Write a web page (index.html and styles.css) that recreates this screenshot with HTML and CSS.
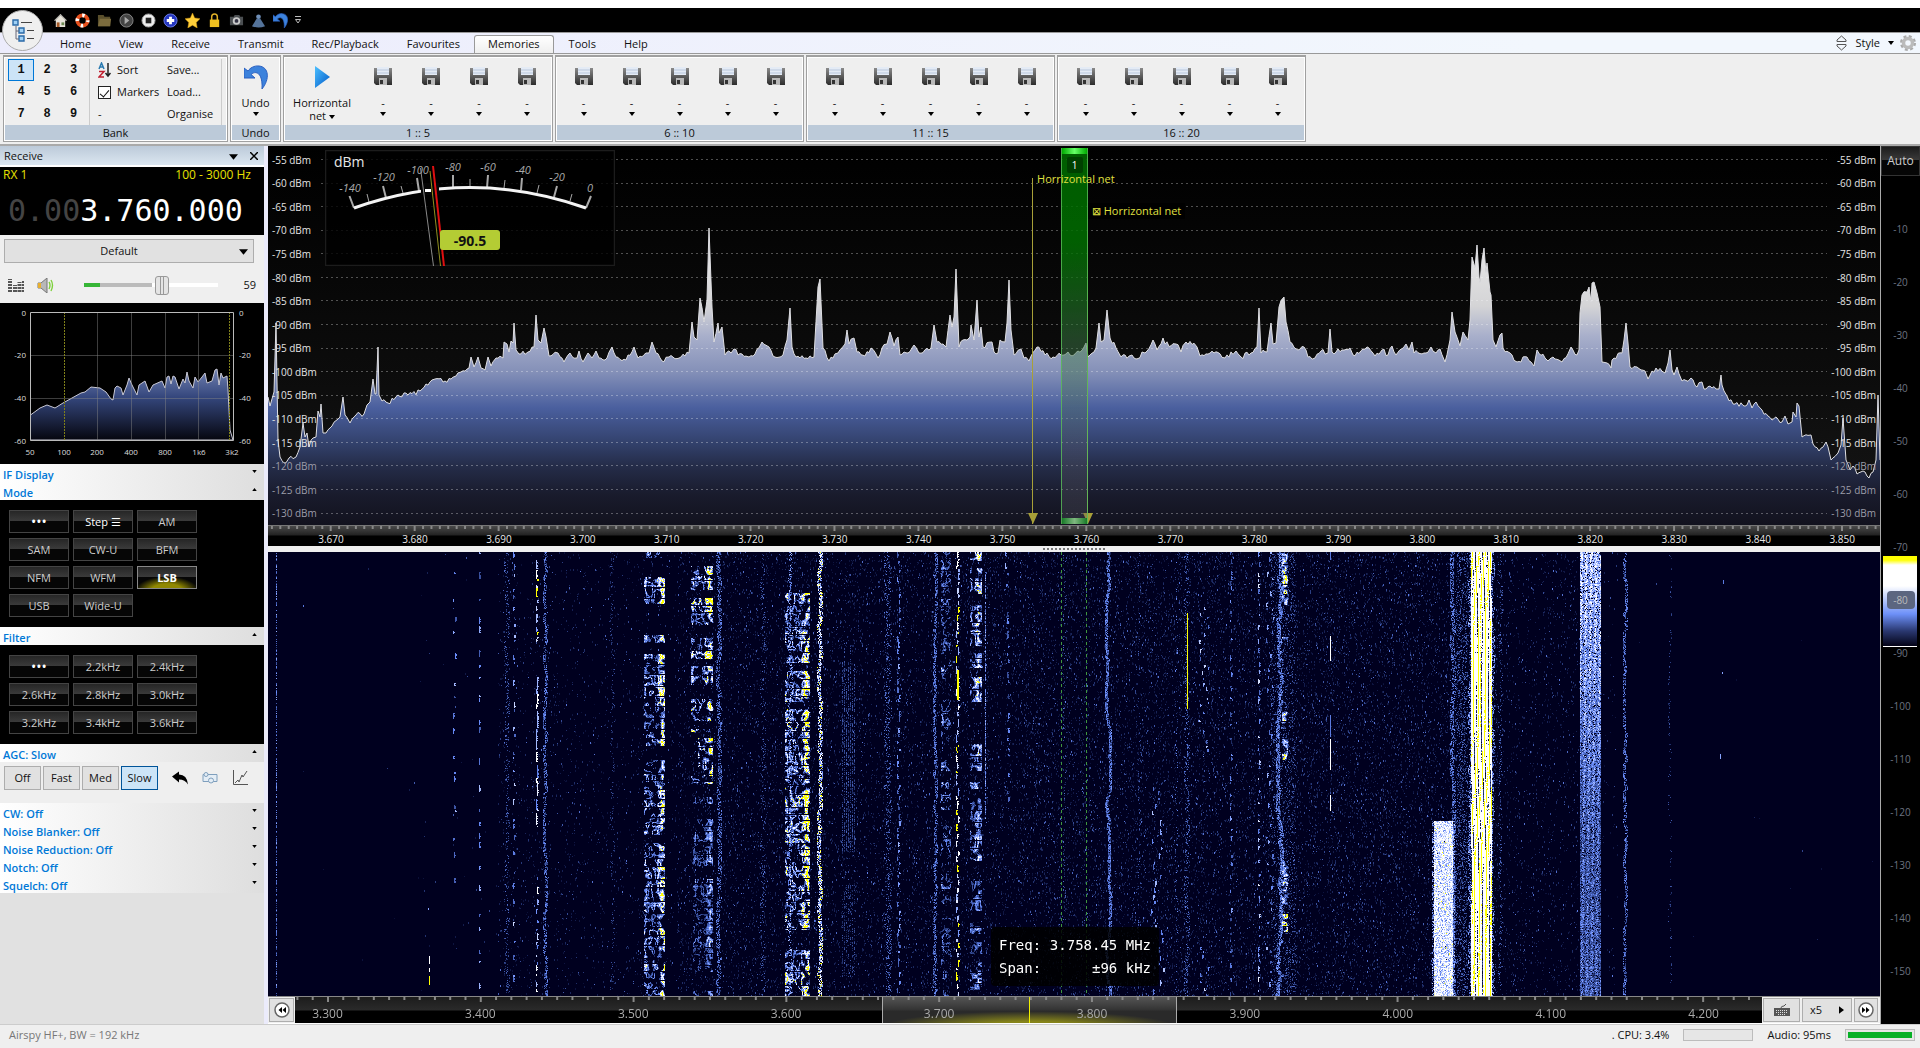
FILE: index.html
```html
<!DOCTYPE html>
<html lang="en">
<head>
<meta charset="utf-8">
<title>SDR Console</title>
<link rel="stylesheet" href="styles.css">
</head>
<body>
<svg class="defs" aria-hidden="true">
  <defs>
    <linearGradient id="gDisk" x1="0" y1="0" x2="0" y2="1"><stop offset="0" stop-color="#8a8a8a"/><stop offset="1" stop-color="#2c2c2c"/></linearGradient>
    <linearGradient id="gBlue" x1="0" y1="0" x2="1" y2="1"><stop offset="0" stop-color="#4cc0ff"/><stop offset="1" stop-color="#0058c8"/></linearGradient>
    <symbol id="disk" viewBox="0 0 18 18"><path d="M0 1h18v17H2l-2-2z" fill="url(#gDisk)"/><path d="M3 0h12v8H3z" fill="#e4ebf5"/><path d="M3 3h12M3 6h12" stroke="#b9c7dc"/><path d="M5 11h8v7H5z" fill="#b9b9b9"/><path d="M6 13h3v4H6z" fill="#333"/></symbol>
    <symbol id="down" viewBox="0 0 6 4"><path d="M0 0h6L3 4z"/></symbol>
    <symbol id="up" viewBox="0 0 6 4"><path d="M0 4h6L3 0z"/></symbol>
    <symbol id="undo" viewBox="0 0 24 24"><path d="M0 3v10h11l-4-3.500C12 5 19 8 18 24 26 14 25 2 15 1 10 .500 6 3 4 6z" fill="#3c82dc" stroke="#2a5fc0" stroke-width="1"/></symbol>
  </defs>
</svg>

<header class="top">
  <button class="app" aria-label="Application menu"><svg viewBox="0 0 40 40" width="40" height="40"><g fill="#9fd0f5" stroke="#2a6aa8" stroke-width="1.4"><path d="M10 9h5v5h-5zM16 17h5v5h-5zM16 25h5v5h-5z"/></g><path d="M13 15v13h3M13 20h3" fill="none" stroke="#667" /><path d="M18 11.500h11M24 19.500h7M24 27.500h7" stroke="#444"/></svg></button>
  <div class="qat">
    <button aria-label="Home"><svg viewBox="0 0 16 16"><path d="M1 8l7-7 7 7h-2v7H3V8z" fill="#e8e4da"/><path d="M2 8l6-6 6 6" fill="none" stroke="#8b8b8b"/><path d="M4 10h3v5H4z" fill="#a65a28"/><path d="M9 10h3v3H9z" fill="#6d8a55"/></svg></button>
    <button aria-label="Support"><svg viewBox="0 0 16 16"><circle cx="8" cy="8" r="5.500" fill="none" stroke="#e8501c" stroke-width="4"/><circle cx="8" cy="8" r="5.500" fill="none" stroke="#fff" stroke-width="4" stroke-dasharray="2.640 6" stroke-dashoffset="1"/></svg></button>
    <button aria-label="Open"><svg viewBox="0 0 16 16"><path d="M1 2h6l1 2h6v10H1z" fill="#5a4f2c"/><path d="M3 6h12l-1 8H1z" fill="#7c6c3e"/></svg></button>
    <button aria-label="Play"><svg viewBox="0 0 16 16"><circle cx="8" cy="8" r="7" fill="#444" stroke="#888"/><path d="M6 4l5 4-5 4z" fill="#aaa"/></svg></button>
    <button aria-label="Stop"><svg viewBox="0 0 16 16"><circle cx="8" cy="8" r="7" fill="#eee" stroke="#999"/><path d="M5 5h6v6H5z" fill="#222"/></svg></button>
    <button aria-label="Add"><svg viewBox="0 0 16 16"><circle cx="8" cy="8" r="7" fill="#2436c0" stroke="#6f80e8"/><path d="M6.500 4h3v2.500H12v3H9.500V12h-3V9.500H4v-3h2.500z" fill="#fff"/></svg></button>
    <button aria-label="Favourite"><svg viewBox="0 0 16 16"><path d="M8 0l2.300 5.300L16 6l-4 4 1 6-5-3-5 3 1-6-4-4 5.700-.7z" fill="#ffcf3a" stroke="#d89a10" stroke-width=".5"/></svg></button>
    <button aria-label="Lock"><svg viewBox="0 0 16 16"><path d="M5 8V4a3 3 0 016 0v4" fill="none" stroke="#e0b028" stroke-width="1.600"/><path d="M3 7h10v8H3z" fill="#f0c020"/></svg></button>
    <button aria-label="Snapshot"><svg viewBox="0 0 16 16"><path d="M1 4h4l1-2h5l1 2h3v9H1z" fill="#4b4f52"/><circle cx="8" cy="8.500" r="4" fill="#c8c8c8"/><circle cx="8" cy="8.500" r="2" fill="#334"/></svg></button>
    <button aria-label="Recording"><svg viewBox="0 0 16 16"><path d="M6 6h4l5 8q-7 3-14 0z" fill="#54739a"/><circle cx="8" cy="4" r="2.500" fill="#6f8fb8"/></svg></button>
    <button aria-label="Undo"><svg viewBox="0 0 24 24"><use href="#undo"/></svg></button>
    <button class="more" aria-label="Customise"><svg viewBox="0 0 6 8" width="6" height="8"><path d="M0 .5h6M.5 3.500h5L3 7z" fill="none" stroke="#bbb"/></svg></button>
  </div>
  <nav class="tabs">
    <a href="#">Home</a><a href="#">View</a><a href="#">Receive</a><a href="#">Transmit</a><a href="#">Rec/Playback</a><a href="#">Favourites</a><a href="#" class="on">Memories</a><a href="#">Tools</a><a href="#">Help</a>
    <div class="tabs-end">
      <button aria-label="Resize"><svg viewBox="0 0 11 16" width="11" height="16" fill="none" stroke="#555"><path d="M1 6.500V5l4.500-4L10 5v1.500zM1 9.500V11l4.500 4L10 11V9.500z"/></svg></button>
      <button class="style">Style <svg width="6" height="4"><use href="#down"/></svg></button>
      <button aria-label="Settings"><svg viewBox="0 0 16 16" width="16" height="16"><circle cx="8" cy="8" r="6.500" fill="none" stroke="#aaa" stroke-width="3" stroke-dasharray="2.800 2.300"/><circle cx="8" cy="8" r="4.500" fill="none" stroke="#bbb" stroke-width="3.500"/></svg></button>
    </div>
  </nav>
</header>

<section class="ribbon" aria-label="Memories">
  <div class="group bank">
    <div class="group-body">
      <div class="nums"><button class="on">1</button><button>2</button><button>3</button><button>4</button><button>5</button><button>6</button><button>7</button><button>8</button><button>9</button></div>
      <div class="cmds">
        <button><svg viewBox="0 0 13 16" width="13" height="16" fill="none" stroke-width="1.500"><path d="M1 7l2.500-6L6 7M2 5h3" stroke="#2a7ab0"/><path d="M1 9.500h5L1 15h5" stroke="#c02030"/><path d="M10 1v12M7.500 11l2.500 3 2.500-3" stroke="#222"/></svg>Sort</button>
        <label><input type="checkbox" checked>Markers</label>
        <button>-</button>
      </div>
      <div class="cmds files"><button>Save...</button><button>Load...</button><button>Organise</button></div>
    </div>
    <h2>Bank</h2>
  </div>
  <div class="group undo">
    <div class="group-body"><button class="big"><svg class="ico" viewBox="0 0 24 24"><use href="#undo"/></svg><span>Undo</span><svg class="arr"><use href="#down"/></svg></button></div>
    <h2>Undo</h2>
  </div>
  <div class="group first">
    <div class="group-body">
      <button class="big wide"><svg class="ico" viewBox="0 0 24 24"><path d="M5 1l15 11L5 23z" fill="url(#gBlue)"/></svg><span>Horrizontal<br>net <svg class="arr"><use href="#down"/></svg></span></button>
      <button class="big"><svg class="disk"><use href="#disk"/></svg><span>-</span><svg class="arr"><use href="#down"/></svg></button>
      <button class="big"><svg class="disk"><use href="#disk"/></svg><span>-</span><svg class="arr"><use href="#down"/></svg></button>
      <button class="big"><svg class="disk"><use href="#disk"/></svg><span>-</span><svg class="arr"><use href="#down"/></svg></button>
      <button class="big"><svg class="disk"><use href="#disk"/></svg><span>-</span><svg class="arr"><use href="#down"/></svg></button>
    </div>
    <h2>1 :: 5</h2>
  </div>
  <div class="group">
    <div class="group-body">
      <button class="big"><svg class="disk"><use href="#disk"/></svg><span>-</span><svg class="arr"><use href="#down"/></svg></button>
      <button class="big"><svg class="disk"><use href="#disk"/></svg><span>-</span><svg class="arr"><use href="#down"/></svg></button>
      <button class="big"><svg class="disk"><use href="#disk"/></svg><span>-</span><svg class="arr"><use href="#down"/></svg></button>
      <button class="big"><svg class="disk"><use href="#disk"/></svg><span>-</span><svg class="arr"><use href="#down"/></svg></button>
      <button class="big"><svg class="disk"><use href="#disk"/></svg><span>-</span><svg class="arr"><use href="#down"/></svg></button>
    </div>
    <h2>6 :: 10</h2>
  </div>
  <div class="group">
    <div class="group-body">
      <button class="big"><svg class="disk"><use href="#disk"/></svg><span>-</span><svg class="arr"><use href="#down"/></svg></button>
      <button class="big"><svg class="disk"><use href="#disk"/></svg><span>-</span><svg class="arr"><use href="#down"/></svg></button>
      <button class="big"><svg class="disk"><use href="#disk"/></svg><span>-</span><svg class="arr"><use href="#down"/></svg></button>
      <button class="big"><svg class="disk"><use href="#disk"/></svg><span>-</span><svg class="arr"><use href="#down"/></svg></button>
      <button class="big"><svg class="disk"><use href="#disk"/></svg><span>-</span><svg class="arr"><use href="#down"/></svg></button>
    </div>
    <h2>11 :: 15</h2>
  </div>
  <div class="group">
    <div class="group-body">
      <button class="big"><svg class="disk"><use href="#disk"/></svg><span>-</span><svg class="arr"><use href="#down"/></svg></button>
      <button class="big"><svg class="disk"><use href="#disk"/></svg><span>-</span><svg class="arr"><use href="#down"/></svg></button>
      <button class="big"><svg class="disk"><use href="#disk"/></svg><span>-</span><svg class="arr"><use href="#down"/></svg></button>
      <button class="big"><svg class="disk"><use href="#disk"/></svg><span>-</span><svg class="arr"><use href="#down"/></svg></button>
      <button class="big"><svg class="disk"><use href="#disk"/></svg><span>-</span><svg class="arr"><use href="#down"/></svg></button>
    </div>
    <h2>16 :: 20</h2>
  </div>
</section>

<main>
  <aside class="side">
    <div class="side-title"><span>Receive</span><button aria-label="Menu"><svg viewBox="0 0 10 6" width="9" height="6"><path d="M0 0h10L5 6z"/></svg></button><button aria-label="Close"><svg viewBox="0 0 8 8" width="8" height="8"><path d="M0 0l8 8M8 0L0 8" stroke="#000" stroke-width="1.500"/></svg></button></div>
    <div class="rx">
      <div class="rx-info"><span>RX 1</span><span>100 - 3000 Hz</span></div>
      <div class="freq"><span>0.00</span>3.760.000</div>
    </div>
    <div class="controls">
      <div class="pick"><select aria-label="Audio device"><option>Default</option></select><svg viewBox="0 0 10 6" width="9" height="6"><path d="M0 0h10L5 6z"/></svg></div>
      <div class="volume">
        <svg viewBox="0 0 16 13" width="16" height="13" fill="none" stroke="#555" stroke-width="4" stroke-dasharray="2 1"><path d="M2 13V0M7 13V6M11.500 13V3" /><path d="M15 13V1" stroke-width="2"/></svg>
        <svg viewBox="0 0 17 15" width="17" height="15"><path d="M1 5h3l6-5v15l-6-5H1z" fill="#b8b8b8" stroke="#777"/><path d="M1 5h3v5H1z" fill="#e8b030"/><path d="M12 4q2 3 0 7M14 2q3 5 0 11" fill="none" stroke="#7ed03c" stroke-width="1.400"/></svg>
        <input type="range" min="0" max="100" value="59" aria-label="Volume">
        <output>59</output>
      </div>
    </div>
    <svg class="audio" viewBox="0 0 264 161" role="img" aria-label="Audio spectrum">
      <defs><linearGradient id="gAud" gradientUnits="userSpaceOnUse" x1="0" y1="66" x2="0" y2="137"><stop offset="0" stop-color="#7080b0"/><stop offset=".4" stop-color="#34467c"/><stop offset="1" stop-color="#06060f"/></linearGradient></defs>
      <path fill="url(#gAud)" stroke="#c8c8d4" d="M30.500 137V112L40 105 47 102 55 105 63 100 72 95 81 90 85 89 91 84 100 85 106 89 111 96 113 97 115 85 117 83 121 85 123 92 127 82 129 75 132 82 137 92 139 82 145 78 149 89 153 82 162 78 165 85 167 74 169 73 171 81 173 73 175 74 179 86 183 76 185 80 187 69 189 78 193 85 195 74 198 79 202 74 205 70 207 80 212 78 215 67 217 66 219 82 221 70 223 75 227 73 228 87 230 127 233 137z"/>
      <path d="M97.500 9v128M131.500 9v128M165.500 9v128M198.500 9v128M30 52.500h203M30 95.500h203" stroke="#888" opacity=".45" fill="none"/>
      <path d="M64.500 9v128M229.500 9v128" stroke="#80801a" stroke-dasharray="2 1" fill="none"/>
      <path d="M30.500 9.500h203v128h-203z" stroke="#bbb" fill="none"/>
      <g class="end"><text x="26" y="13">0</text><text x="26" y="55">-20</text><text x="26" y="98">-40</text><text x="26" y="141">-60</text></g>
      <g><text x="239" y="13">0</text><text x="239" y="55">-20</text><text x="239" y="98">-40</text><text x="239" y="141">-60</text></g>
      <g class="mid"><text x="30" y="152">50</text><text x="64" y="152">100</text><text x="97" y="152">200</text><text x="131" y="152">400</text><text x="165" y="152">800</text><text x="199" y="152">1k6</text><text x="232" y="152">3k2</text></g>
    </svg>
    <h3><button>IF Display<svg><use href="#down"/></svg></button></h3>
    <h3><button>Mode<svg><use href="#up"/></svg></button></h3>
    <div class="keys"><button class="dots">•••</button><button class="lit">Step ☰</button><button>AM</button><button>SAM</button><button>CW-U</button><button>BFM</button><button>NFM</button><button>WFM</button><button class="on">LSB</button><button>USB</button><button>Wide-U</button></div>
    <h3><button>Filter<svg><use href="#up"/></svg></button></h3>
    <div class="keys"><button class="dots">•••</button><button>2.2kHz</button><button>2.4kHz</button><button>2.6kHz</button><button>2.8kHz</button><button>3.0kHz</button><button>3.2kHz</button><button>3.4kHz</button><button>3.6kHz</button></div>
    <h3><button>AGC: Slow<svg><use href="#up"/></svg></button></h3>
    <div class="agc">
      <button>Off</button><button>Fast</button><button>Med</button><button class="on">Slow</button>
      <button class="bare" aria-label="Reset"><svg viewBox="0 0 16 13"><path d="M0 5l7-5v3q8 0 9 10-3-5-9-5v3z"/></svg></button>
      <button class="bare" aria-label="Options"><svg viewBox="0 0 16 13" fill="#e4edf5" stroke="#7f9fbd"><path d="M1 3h14v7H1z"/><circle cx="4" cy="3" r="2"/><circle cx="9" cy="9" r="2.500"/></svg></button>
      <button class="bare" aria-label="Graph"><svg viewBox="0 0 16 16" fill="none" stroke="#555"><path d="M1.500 0v14.500H16M3 13l3-3 1 2 3-7 1 2 4-6"/></svg></button>
    </div>
    <h3><button>CW: Off<svg><use href="#down"/></svg></button></h3>
    <h3><button>Noise Blanker: Off<svg><use href="#down"/></svg></button></h3>
    <h3><button>Noise Reduction: Off<svg><use href="#down"/></svg></button></h3>
    <h3><button>Notch: Off<svg><use href="#down"/></svg></button></h3>
    <h3><button>Squelch: Off<svg><use href="#down"/></svg></button></h3>
  </aside>

  <section class="center">
    <div class="spectrum">
      <svg class="trace" viewBox="0 0 1612 379" preserveAspectRatio="none" aria-label="Spectrum">
        <defs><linearGradient id="gSp" gradientUnits="userSpaceOnUse" x1="0" y1="79" x2="0" y2="379"><stop offset="0" stop-color="#efefef"/><stop offset=".27" stop-color="#d4d4d6"/><stop offset=".37" stop-color="#a8afcb"/><stop offset=".49" stop-color="#8490b8"/><stop offset=".61" stop-color="#4a5f9e"/><stop offset=".72" stop-color="#34436f"/><stop offset=".8" stop-color="#252d4a"/><stop offset=".9" stop-color="#191b2c"/><stop offset="1" stop-color="#12121e"/></linearGradient></defs>
        <path id="fill" fill="url(#gSp)"/><path id="line" fill="none" stroke="#dedee2"/>
        <g id="grid" stroke="#fff" stroke-opacity=".3" stroke-dasharray="2 3"></g>
      </svg>
      <ul class="db"><li>-55 dBm</li><li>-60 dBm</li><li>-65 dBm</li><li>-70 dBm</li><li>-75 dBm</li><li>-80 dBm</li><li>-85 dBm</li><li>-90 dBm</li><li>-95 dBm</li><li>-100 dBm</li><li>-105 dBm</li><li>-110 dBm</li><li>-115 dBm</li><li>-120 dBm</li><li>-125 dBm</li><li>-130 dBm</li></ul>
      <ul class="db right"><li>-55 dBm</li><li>-60 dBm</li><li>-65 dBm</li><li>-70 dBm</li><li>-75 dBm</li><li>-80 dBm</li><li>-85 dBm</li><li>-90 dBm</li><li>-95 dBm</li><li>-100 dBm</li><li>-105 dBm</li><li>-110 dBm</li><li>-115 dBm</li><li>-120 dBm</li><li>-125 dBm</li><li>-130 dBm</li></ul>
      <svg class="meter" viewBox="0 0 290 116" role="img" aria-label="Signal meter">
        <path d="M.5.5h289v115H.5z" fill="#000" fill-opacity=".8" stroke="#1c1c1c" stroke-width="1.500"/>
        <g stroke="#a8a8a8" stroke-width="2"><path d="M24.500 46L29 58M58 36l3 12M92 28l2 13M128 25v13M163 25l-1 13M197 28l-1 12M232 36l-3 11M266 46l-5 12"/><path d="M42 44l2 8M76 36l2 7M145 29v8M180 30l-1 8M214 35l-2 8M247 44l-2 7" stroke-width="1"/></g>
        <path d="M29 58Q145 17 261 58" fill="none" stroke="#f4f4f4" stroke-width="3"/>
        <path d="M96 33h18v12H96z" fill="#050505"/><path d="M100 40.500h6" stroke="#fff" stroke-width="3"/>
        <path d="M95.500 18l13 98" stroke="#888"/><path d="M105 21l10.500 95" stroke="#909020"/><path d="M108 16l11 100" stroke="#e01010" stroke-width="2"/>
        <text x="9" y="17" class="unit">dBm</text>
        <g class="nums"><text x="25" y="42">-140</text><text x="59" y="31">-120</text><text x="93" y="24">-100</text><text x="128" y="21">-80</text><text x="163" y="21">-60</text><text x="198" y="24">-40</text><text x="232" y="31">-20</text><text x="265" y="42">0</text></g>
        <rect x="115" y="80" width="60" height="20" rx="3" fill="#b4cc34"/><text x="145" y="96" class="val">-90.5</text>
      </svg>
      <div class="marker low" style="left:50.800%"><span>⊠ Horrizontal net</span></div>
      <div class="pass" style="left:49.200%;width:1.670%"><b>1</b></div>
      <div class="marker" style="left:47.400%"><span>Horrizontal net</span></div>
    </div>
    <div class="fscale"><svg id="ticks1"></svg><ol><li>3.670</li><li>3.680</li><li>3.690</li><li>3.700</li><li>3.710</li><li>3.720</li><li>3.730</li><li>3.740</li><li>3.750</li><li>3.760</li><li>3.770</li><li>3.780</li><li>3.790</li><li>3.800</li><li>3.810</li><li>3.820</li><li>3.830</li><li>3.840</li><li>3.850</li></ol></div>
    <div class="split"><i></i></div>
    <div class="fall">
      <canvas id="fall"></canvas>
      <i class="edge" style="left:49.200%"></i><i class="edge" style="left:50.750%"></i>
      <div class="tip"><span>Freq:</span><span>3.758.45 MHz</span><span>Span:</span><span>±96 kHz</span></div>
    </div>
    <div class="nav">
      <button class="jump" aria-label="Back"><svg viewBox="0 0 16 16" width="16" height="16"><circle cx="8" cy="8" r="7" fill="#fff" stroke="#666" stroke-width="1.500"/><path d="M8 5v6L4.500 8zM12 5v6L8.500 8z"/></svg></button>
      <div class="wide-scale"><div class="view" style="left:40%;width:20.100%"><i></i></div><svg id="ticks2"></svg><ol><li>3.300</li><li>3.400</li><li>3.500</li><li>3.600</li><li>3.700</li><li>3.800</li><li>3.900</li><li>4.000</li><li>4.100</li><li>4.200</li></ol></div>
      <div class="nav-end">
        <button aria-label="Keyboard"><svg viewBox="0 0 16 13" width="16" height="13"><path d="M0 4h16v8H0z" fill="#555"/><path d="M2 6.500h12M2 8.500h12M4 10.500h8" stroke="#ddd" stroke-dasharray="1 1"/><path d="M7 4q0-2 3-2l2-2" fill="none" stroke="#555"/></svg></button>
        <button class="zoom">x5<svg viewBox="0 0 4 6" width="5" height="8"><path d="M0 0l4 3-4 3z"/></svg></button>
        <button aria-label="Forward"><svg viewBox="0 0 16 16" width="16" height="16"><circle cx="8" cy="8" r="7" fill="#fff" stroke="#666" stroke-width="1.500"/><path d="M8 5v6l3.500-3zM4 5v6l3.500-3z"/></svg></button>
      </div>
    </div>
  </section>

  <section class="level">
    <button>Auto</button>
    <div class="ramp"></div>
    <ul><li>-10</li><li>-20</li><li>-30</li><li>-40</li><li>-50</li><li>-60</li><li>-70</li><li class="thumb"><span>-80</span></li><li>-90</li><li>-100</li><li>-110</li><li>-120</li><li>-130</li><li>-140</li><li>-150</li></ul>
  </section>
</main>

<footer><span class="dev">Airspy HF+, BW = 192 kHz</span><span>. CPU: 3.4%</span><div class="bar"></div><span>Audio: 95ms</span><div class="bar full"><i></i></div></footer>
<script src="app.js"></script>
</body>
</html>
```
FILE: styles.css
```css
* { box-sizing: border-box; }
body { margin: 0; min-height: 100vh; display: flex; flex-direction: column; background: #efefef; color: #111; font: 11px/16px "Open Sans", "Noto Sans", sans-serif; }
button { font: inherit; color: inherit; background: none; border: 0; padding: 0; margin: 0; }
ul, ol { list-style: none; margin: 0; padding: 0; }
h2, h3 { margin: 0; font: inherit; }
a { color: inherit; text-decoration: none; }
svg { flex: none; }
.defs { position: absolute; width: 0; height: 0; }

.top { position: relative; padding-top: 8px; background: #fff; }
.app { position: absolute; left: 2px; top: 10px; width: 41px; height: 41px; border-radius: 50%; border: 1px solid #aaa; background: #efefef; overflow: hidden; z-index: 1; }
.app svg { display: block; }
.qat { display: flex; align-items: center; height: 24px; padding-left: 49px; background: #000; }
.qat button { width: 22px; height: 16px; display: flex; justify-content: center; align-items: center; }
.qat svg { width: 15px; height: 15px; }
.qat .more { width: 14px; }
.qat .more svg { width: 6px; height: 8px; }
.tabs { display: flex; height: 22px; padding-left: 46px; background: linear-gradient(90deg, #ececfc, #f2f7fd 80%); border: solid #999; border-width: 1px 0; }
.tabs a { padding: 3px 14px 0; }
.tabs .on { padding: 0 13px; margin: 2px 1px 0 0; border: 1px solid #999; border-bottom: 0; border-radius: 3px 3px 0 0; background: linear-gradient(#fff, #efefef); }
.tabs-end { margin-left: auto; display: flex; align-items: center; gap: 6px; padding-right: 4px; }
.tabs-end button { display: flex; align-items: center; gap: 8px; }
.tabs-end .style { margin-left: 3px; }

.ribbon { display: flex; gap: 2px; height: 92px; padding: 1px 3px 2px; border-bottom: 2px solid #aaa; }
.group { width: 249px; display: flex; flex-direction: column; border: 1px solid #a0a0a0; border-top-width: 2px; box-shadow: inset 0 0 0 1px #fff; padding: 1px; }
.bank { width: 225px; }
.undo { width: 51px; }
.first { width: 270px; }
.group h2 { height: 15px; line-height: 15px; text-align: center; background: #bccad9; }
.group-body { flex: 1; display: flex; justify-content: center; }
.bank .group-body { justify-content: flex-start; padding: 1px 3px 0; }
.nums { display: grid; grid-template-columns: repeat(3, 26px); grid-auto-rows: 22px; }
.bank .nums { grid-template-columns: 26px 26px 27px; padding-right: 1px; margin-right: -1px; }
.nums button { font: bold 12px "Liberation Mono", monospace; border: 1px solid transparent; }
.nums .on { border-color: #0078d7; background: #cce4f7; }
.cmds { display: grid; grid-auto-rows: 22px; justify-items: start; padding: 0 4px 0 8px; margin-left: 2px; border-left: 1px solid #ccc; width: 77px; }
.cmds button, .cmds label { display: flex; align-items: center; gap: 6px; }
.files { width: 56px; margin: 0; padding: 0 0 0 1px; border: solid #ccc; border-width: 0 1px 0 0; }
.cmds input { appearance: none; margin: 0; width: 13px; height: 13px; border: 1px solid #222; background: #fff; display: grid; place-items: center; }
.cmds input::after { content: ""; width: 4px; height: 8px; border: solid #111; border-width: 0 1px 1px 0; transform: rotate(40deg); }
.big { width: 48px; display: flex; flex-direction: column; align-items: center; padding-top: 8px; line-height: 13px; }
.big .ico { width: 26px; height: 24px; margin: -1px 0 7px; }
.big .disk { width: 18px; height: 18px; margin: 1px 0 11px; }
.big .arr { width: 6px; height: 4px; margin-top: 3px; vertical-align: middle; }
.big span .arr { margin: 0; }
.big.wide { width: 74px; }

main { flex: 1; display: flex; background: #ebebfb; }
.side { width: 264px; margin-right: 4px; background: #e1e1e1; }
.side-title { display: flex; align-items: center; gap: 12px; height: 21px; padding: 0 6px 0 4px; background: linear-gradient(#bccad9, #dbe6f0); border-bottom: 2px solid #fff; }
.side-title span { flex: 1; }
.rx { height: 68px; background: #000; color: #e6e000; }
.rx-info { display: flex; justify-content: space-between; padding: 0 13px 0 3px; font-size: 12px; }
.freq { font: 30px/36px "DejaVu Sans Mono", monospace; color: #fff; padding: 10px 8px 6px; }
.freq span { color: #444; }
.controls { height: 68px; padding: 4px; background: #efefef; }
.pick { position: relative; width: 250px; }
.pick select { width: 100%; height: 24px; appearance: none; border: 1px solid #adadad; border-radius: 0; background: #e1e1e1; font: inherit; color: inherit; text-align-last: center; padding: 0 20px 0 0; }
.pick svg { position: absolute; right: 6px; top: 10px; }
.volume { display: flex; align-items: center; height: 40px; padding: 4px 4px 0; }
.volume svg + svg { margin: 0 30px 0 13px; }
.volume input { appearance: none; width: 134px; height: 20px; margin: 0; background: linear-gradient(90deg, #36b536 16px, #bbb 16px 68px, #fff 68px) center / 100% 4px no-repeat; border-radius: 3px; }
.volume input::-webkit-slider-thumb { appearance: none; width: 14px; height: 19px; border: 1px solid #999; border-radius: 3px; background: linear-gradient(90deg, transparent 4px, #999 4px 5px, transparent 5px 7px, #999 7px 8px, transparent 8px), #e4e4e4; }
.volume output { flex: 1; text-align: right; }
.audio { display: block; width: 100%; background: #000; font-size: 8px; fill: #ddd; }
.end { text-anchor: end; }
.mid { text-anchor: middle; }
.side h3 button { display: flex; justify-content: space-between; align-items: center; width: 100%; height: 18px; padding: 4px 7px 0 3px; background: linear-gradient(90deg, #fff, #dedede); color: #0078d7; font-weight: 600; }
.side h3 svg { width: 5px; height: 3px; margin-bottom: 8px; }
.keys { display: grid; grid-template-columns: repeat(3, 60px); grid-auto-rows: 23px; gap: 5px 4px; padding: 10px 9px; background: #000; }
.keys button { border: 1px solid #444; background: linear-gradient(#262626, #3a3a3a 46%, #060606 47%); color: #ccc; }
.keys .lit, .keys .dots { color: #fff; }
.keys .dots { font-size: 14px; line-height: 14px; }
.keys .on { border-color: #888; color: #fff; font-weight: 700; background: radial-gradient(55% 70% at 50% 115%, #908800 50%, transparent), linear-gradient(#262626, #3a3a3a 46%, #060606 47%); }
.agc { display: flex; align-items: center; gap: 2px; height: 41px; padding: 0 4px 9px; background: #efefef; }
.agc button { width: 37px; height: 24px; border: 1px solid #adadad; background: #e1e1e1; }
.agc .on { border-color: #005499; background: #cce4f7; }
.agc .bare { width: 28px; border: 0; background: none; display: grid; place-items: center; }
.agc .on + .bare { margin-left: 6px; }
.agc .bare svg { width: 16px; height: 16px; }

.center { flex: 1; min-width: 0; display: flex; flex-direction: column; }
.spectrum { position: relative; height: 379px; overflow: hidden; background: linear-gradient(#000, #0c0c0c 60%, #161616); color: #e4e4e4; }
.trace { display: block; width: 100%; height: 100%; }
.db { position: absolute; left: 4px; top: 2px; bottom: 0; display: flex; flex-direction: column; font-size: 10px; }
.db li { flex: 1; display: flex; align-items: center; }
.db li:nth-child(n+14) { color: #9c9ca8; }
.right { left: auto; right: 4px; }
.right li { justify-content: flex-end; }
.meter { position: absolute; left: 57px; top: 4px; width: 290px; height: 116px; font-size: 11px; }
.meter .unit { fill: #e8e8e8; font-size: 14px; }
.meter .nums { display: inline; fill: #a8a8a8; font-style: italic; text-anchor: middle; }
.meter .val { font-size: 14px; font-weight: 700; text-anchor: middle; fill: #111; }
.marker { position: absolute; top: 32px; bottom: 1px; border-left: 1px solid #a8a038; color: #e0e040; }
.marker.low { top: 64px; }
.marker::after { content: ""; position: absolute; left: -5px; bottom: 0; border: 5px solid transparent; border-top: 11px solid #a8a038; border-bottom: 0; }
.marker span { position: absolute; left: 0; top: -7px; padding: 0 4px; white-space: nowrap; }
.marker.low span { background: #000; }
.pass { position: absolute; top: 2px; bottom: 1px; border: solid rgba(90, 190, 90, .8); border-width: 0 1px; background: linear-gradient(90deg, #0a0, #6f6, #0a0) top / 100% 6px no-repeat, linear-gradient(90deg, #187a28, #80b880, #187a28) bottom / 100% 6px no-repeat, linear-gradient(rgba(0, 110, 0, .85), rgba(0, 110, 0, .85) 25%, rgba(60, 120, 70, .5) 52%, rgba(90, 90, 100, .3) 80%); }
.pass b { display: block; width: 16px; margin: 9px auto; background: #004000; color: #fff; text-align: center; font-size: 10px; font-weight: 400; border-radius: 2px; }
.fscale { position: relative; height: 21px; overflow: hidden; background: linear-gradient(#4a4a4a, #222 9px, #000 10px); border-top: 1px solid #777; color: #e8e8e8; }
.fscale svg, .wide-scale svg { position: absolute; left: 0; top: 0; width: 100%; height: 8px; }
.fscale ol { display: flex; padding: 5px 0 0 21px; margin-right: -4px; font-size: 10px; }
.fscale li, .wide-scale li { flex: 1; text-align: center; }
.split { height: 6px; background: #efefef; display: grid; place-items: center; }
.split i { width: 62px; height: 2px; background: repeating-linear-gradient(90deg, #777 0 2px, transparent 2px 4px); }
.fall { position: relative; flex: 1; min-height: 444px; background: #00001f; }
.fall canvas { position: absolute; width: 100%; height: 100%; }
.edge { position: absolute; top: 0; bottom: 0; width: 1px; background: repeating-linear-gradient(#3f963f 0 3px, transparent 3px 6px); }
.tip { position: absolute; left: 723px; bottom: 10px; width: 168px; height: 59px; padding: 7px 8px; border-radius: 4px; background: rgba(0, 0, 0, .85); color: #fff; font: 14px/23px "DejaVu Sans Mono", monospace; display: grid; grid-template-columns: auto 1fr; }
.tip span:nth-child(even) { text-align: right; }
.nav { display: flex; height: 28px; border-top: 1px solid #888; border-bottom: 1px solid #fff; background: #efefef; }
.nav button { border: 1px solid #adadad; background: #e1e1e1; display: flex; align-items: center; justify-content: center; }
.nav .jump { width: 25px; margin: 1px; }
.wide-scale { position: relative; flex: 1; overflow: hidden; background: linear-gradient(#1c1c1c, #2a2a2a 13px, #000 14px); color: #aaa; }
.wide-scale ol { position: relative; display: flex; margin: 0 -18px 0 -44px; padding-top: 9px; font-size: 12px; }
.view { position: absolute; top: 0; bottom: 0; border: solid #aaa; border-width: 0 1px; background: radial-gradient(50% 60% at 50% 115%, #86841a 35%, transparent), linear-gradient(#555, #333 13px, #2a2a2a 14px); }
.view i { position: absolute; left: 50%; top: 0; bottom: 0; width: 1px; background: #f0f000; }
.nav-end { display: flex; gap: 2px; padding: 1px 2px 1px 1px; }
.nav-end button { width: 24px; }
.nav-end button:first-child { width: 37px; }
.nav-end .zoom { width: 50px; gap: 17px; }

.level { position: relative; width: 40px; display: flex; flex-direction: column; background: #000; border-left: 1px solid #aaa; color: #6c7480; font-size: 10px; }
.level button { height: 30px; border: 1px solid #333; background: linear-gradient(#1c1c1c, #3a3a3a 46%, #060606 47%); color: #ccc; font-size: 12px; }
.level ul { position: relative; padding-top: 26px; }
.level li { height: 53px; display: grid; place-items: center; }
.thumb span { width: 28px; line-height: 18px; text-align: center; color: #bbb; background: #5c6680; border-radius: 4px; }
.ramp { position: absolute; left: 2px; right: 3px; top: 410px; height: 91px; border-bottom: 1px solid #fff; background: linear-gradient(#ff0 4px, #fff 9px 30px, #6d90f8 58px, #2a3870 75px, #06061c 89px); }

footer { display: flex; align-items: center; gap: 14px; height: 24px; padding: 0 5px 3px 9px; border-top: 1px solid #ccc; background: #efefef; }
.dev { flex: 1; color: #777; }
.bar { width: 70px; height: 12px; border: 1px solid #bcbcbc; background: #e6e6e6; padding: 2px; }
.bar i { display: block; height: 6px; background: #06b025; }
```
FILE: app.js
```js
// Deterministic pseudo random source, so every load draws the same signal
let seed = 20231;
const rnd = () => {
  seed = (seed + 0x6d2b79f5) | 0;
  let t = Math.imul(seed ^ (seed >>> 15), 1 | seed);
  t = (t + Math.imul(t ^ (t >>> 7), 61 | t)) ^ t;
  return ((t ^ (t >>> 14)) >>> 0) / 4294967296;
};

// Spectrum trace, x y pairs
const pts = `0 251 2 260 6 246 8 177 10 294 12 311 16 317 21 312 28 311 32 301 35 277 37 291 39 287 41 301 45 292 48 291 50 265 52 271 53 258 55 287 58 287 64 280 72 271 75 251 77 269 82 277 88 269 96 268 99 259 102 256 105 233 107 248 108 248 110 201 111 249 114 255 120 257 130 249 140 249 152 245 158 238 167 233 177 235 188 230 193 226 201 222 203 211 206 221 210 211 213 222 217 224 220 211 223 220 228 212 235 212 236 196 239 198 241 206 243 195 245 197 246 177 248 204 251 208 260 206 266 201 268 169 270 194 273 197 276 182 281 210 290 207 296 216 302 207 309 212 311 205 315 216 320 207 324 212 328 205 331 212 339 212 344 201 348 211 358 214 366 201 370 212 381 207 384 196 388 207 394 215 401 211 413 211 421 207 424 176 426 191 429 194 432 152 436 176 439 154 441 82 444 161 446 196 450 177 451 187 454 181 457 209 466 203 470 209 481 211 487 208 494 196 501 201 505 210 515 209 519 194 522 162 524 201 528 211 538 212 546 211 550 141 552 133 555 202 561 215 570 207 577 198 579 184 581 198 586 192 589 206 597 210 603 202 610 212 614 202 619 198 622 186 626 200 630 191 632 209 636 206 640 207 646 199 651 207 663 202 666 179 669 196 678 201 682 169 684 181 686 171 688 123 691 201 695 194 702 191 703 179 706 194 709 154 711 191 713 181 715 201 724 196 726 206 730 207 732 194 737 196 739 177 741 134 743 184 746 209 753 203 756 212 761 215 769 201 777 209 785 211 800 206 806 209 815 203 818 197 820 211 828 202 831 177 833 196 836 194 839 164 842 192 848 202 853 211 864 209 866 212 877 207 885 194 889 204 895 192 897 198 908 198 913 206 918 196 929 201 932 210 946 207 957 212 968 205 973 211 983 207 989 201 991 162 993 207 999 206 1003 177 1005 198 1008 197 1011 161 1016 151 1018 176 1022 196 1030 204 1036 201 1040 211 1047 212 1053 205 1060 207 1062 183 1064 206 1082 202 1085 209 1101 202 1107 210 1114 204 1120 209 1124 200 1128 209 1138 198 1141 204 1144 196 1146 207 1158 207 1163 201 1168 207 1172 203 1177 216 1182 194 1184 166 1187 186 1192 200 1195 186 1200 194 1202 174 1204 111 1207 122 1209 99 1211 131 1212 137 1214 114 1216 102 1218 127 1219 117 1222 146 1223 149 1225 194 1228 201 1232 189 1234 187 1235 202 1242 207 1249 216 1259 211 1266 220 1269 204 1280 215 1285 211 1294 216 1303 201 1309 209 1311 204 1312 167 1314 149 1319 146 1321 141 1323 156 1324 137 1326 136 1329 147 1332 161 1334 216 1339 217 1343 222 1344 214 1354 207 1356 194 1358 177 1360 197 1362 221 1369 221 1377 225 1380 233 1388 222 1397 227 1400 217 1402 204 1404 224 1406 229 1409 221 1414 235 1423 232 1429 241 1434 236 1436 243 1444 242 1451 243 1453 229 1454 239 1459 250 1465 258 1479 259 1481 254 1484 262 1488 256 1494 264 1500 270 1514 276 1517 270 1520 278 1524 276 1525 266 1528 271 1529 257 1531 260 1534 291 1543 289 1545 298 1551 305 1558 296 1563 314 1570 307 1573 299 1575 272 1578 314 1582 324 1585 320 1589 328 1597 326 1601 332 1605 326 1608 314 1610 249 1612 314`.split(' ').map(Number);
let d = '';
for (let i = 0; i < pts.length; i += 2) {
  const x = pts[i], y = pts[i + 1];
  d += (i ? 'L' : 'M') + x + ' ' + y;
  const nx = pts[i + 2], ny = pts[i + 3];
  for (let k = x + 2; k < nx - 1; k += 2) {
    d += 'L' + k + ' ' + (y + (ny - y) * (k - x) / (nx - x) + (rnd() - 0.5) * 5).toFixed(1);
  }
}
document.getElementById('line').setAttribute('d', d);
document.getElementById('fill').setAttribute('d', d + 'V379H0Z');

const svgLine = (parent, a) => {
  const l = document.createElementNS('http://www.w3.org/2000/svg', 'line');
  for (const k in a) l.setAttribute(k, a[k]);
  parent.appendChild(l);
};
for (let k = 0; k < 16; k++) {
  const y = Math.round(13 + k * 23.57) + 0.5;
  svgLine(document.getElementById('grid'), { x1: 53, x2: 1559, y1: y, y2: y });
}
// Scale ticks: start offset, step and total width in scale units
const ticks = (id, first, step, per, total) => {
  const svg = document.getElementById(id);
  for (let k = -Math.floor(first / step); first + k * step < total; k++) {
    const x = (first + k * step) / total * 100 + '%';
    svgLine(svg, { x1: x, x2: x, y1: 0, y2: k % per ? 3 : 5, stroke: '#888', 'stroke-width': 2 });
  }
};
ticks('ticks1', 62.7, 8.396, 10, 1612);
ticks('ticks2', 33, 15.29, 10, 1468);

// Waterfall
const cv = document.getElementById('fall');
const W = cv.width = cv.clientWidth, H = cv.height = cv.clientHeight;
const S = W / 1612;
const v = new Float32Array(W * H);
const put = (x, y, a) => {
  x = Math.round(x * S); y |= 0;
  if (x >= 0 && x < W && y >= 0 && y < H && v[y * W + x] < a) v[y * W + x] = a;
};
const dens = x => x < 150 ? 0.0001 : x < 230 ? 0.001 : x < 330 ? 0.025 : x < 410 ? 0.022 : x < 560 ? 0.065
  : x < 750 ? 0.065 : x < 1230 ? 0.085 : x < 1310 ? 0.04 : x < 1350 ? 0.01 : 0.0001;
for (let x = 0; x < 1612; x++) {
  for (let y = 0; y < H; y++) {
    if (rnd() < dens(x)) { const a = 0.08 + rnd() * rnd() * 0.45; put(x, y, a); if (rnd() < 0.5) put(x, y + 1, a); }
  }
}
// A drifting carrier
const carrier = (x, w, den, a, y0 = 0, y1 = H, drift = 1) => {
  let o = 0;
  for (let y = y0; y < y1; y++) {
    if (rnd() < 0.2) o = Math.max(-drift, Math.min(drift, o + (rnd() < 0.5 ? -1 : 1)));
    for (let k = 0; k < w; k++) if (rnd() < den) put(x + o + k, y, a * (0.55 + rnd() * 0.6));
  }
};
// Broken vertical dashes
const dashes = (x, w, on, off, a, y0 = 0, y1 = H) => {
  for (let y = y0; y < y1;) {
    const n = 1 + rnd() * on, b = a * (0.6 + rnd() * 0.5), o = Math.floor(rnd() * w);
    for (let k = 0; k < n && y + k < y1; k++) { put(x + o, y + k, b); if (rnd() < 0.4) put(x + o + 1, y + k, b); }
    y += n + rnd() * off;
  }
};
// Fragmented noise in syllables; hot is the offset at which the signal peaks
const voice = (x, w, a, y0, y1, hot, fill = 0.7) => {
  const gx = 3, gy = 4, cols = Math.ceil(w / gx) + 2;
  const rows = Math.ceil(H / gy) + 2, g = [];
  for (let i = 0; i < cols * rows; i++) g.push(rnd());
  const q = (m, l) => g[l * cols + m];
  let y = y0;
  while (y < y1) {
    const n = 3 + rnd() * 9, on = rnd() < fill, b = 0.75 + rnd() * 0.4;
    for (let j = Math.floor(y); on && j < Math.min(y1, y + n); j++) {
      for (let k = 0; k < w; k++) {
        const fx = k / gx, fy = j / gy, ix = fx | 0, iy = fy | 0, tx = fx - ix, ty = fy - iy;
        const z = (q(ix, iy) * (1 - tx) + q(ix + 1, iy) * tx) * (1 - ty) + (q(ix, iy + 1) * (1 - tx) + q(ix + 1, iy + 1) * tx) * ty;
        const lobe = 0.55 - Math.abs(z - 0.62) * 3.2 + (k < 3 ? 0.15 : 0);
        const near = hot < 0 ? 0 : Math.max(0, 1 - Math.abs(k - hot) / 6) * 0.6;
        const s = a * b * (lobe + 0.2 + near + (rnd() - 0.5) * 0.45);
        if (s > 0.25) put(x + k, j, Math.min(1, s));
      }
    }
    y += n + 2;
  }
};
const solid = (x, y0, y1, a) => { for (let y = y0; y < y1; y++) put(x, y, a); };

carrier(8, 1, 0.55, 0.55, 0, H, 0);
solid(161, 404, 412, 0.8); solid(161, 416, 420, 0.8); solid(161, 424, 433, 1); solid(160, 356, 358, 0.6);
dashes(185, 3, 5, 26, 0.6, 20, 335);
dashes(211, 1, 6, 26, 0.6); carrier(237, 4, 0.22, 0.42); dashes(245, 2, 5, 18, 0.65);
dashes(268, 2, 8, 5, 0.95, 8, 90); dashes(268, 2, 12, 3, 0.82, 125, 275); dashes(268, 2, 6, 8, 0.75, 325, H);
carrier(276, 3, 0.6, 0.5); carrier(343, 3, 0.14, 0.35);
voice(376, 21, 0.82, 25, H, 18, 0.86); voice(378, 16, 0.7, 0, 6, -1, 1);
voice(423, 22, 0.98, 14, 180, 18, 0.92); voice(430, 15, 1, 186, 224, 12, 1); voice(423, 22, 0.9, 224, 232, 19, 1);
voice(425, 20, 0.58, 245, H, 17, 0.55);
carrier(449, 4, 0.5, 0.5); carrier(493, 4, 0.18, 0.4);
voice(517, 25, 0.95, 30, 150, 21, 0.95); voice(517, 25, 1, 157, 378, 21, 0.97); voice(517, 25, 1, 398, H, 21, 1);
carrier(521, 3, 0.4, 0.6);
carrier(550, 4, 0.65, 0.85, 0, H, 1);
for (let k = 574; k < 588; k += 2) { carrier(k, 1, 0.55, 0.38, 90 + (k % 3) * 20, 300, 0); carrier(k, 1, 0.3, 0.35, 333, 425, 0); }
carrier(617, 6, 0.22, 0.45); dashes(629, 3, 5, 7, 0.6);
carrier(666, 3, 0.6, 0.5); voice(673, 10, 0.65, 0, H, -1, 0.75); dashes(688, 3, 7, 4, 0.95); solid(690, 80, 82, 1); solid(689, 118, 148, 1); solid(690, 118, 148, 1);
voice(702, 12, 0.68, 0, 160, 8, 0.75); voice(702, 12, 0.6, 180, H, 8, 0.7); carrier(717, 1, 0.7, 0.6, 20, 270, 0);
dashes(733, 8, 6, 10, 0.6, 0, 40); dashes(739, 2, 5, 20, 0.5, 60, 250);
carrier(839, 3, 0.85, 0.52, 0, H, 2); carrier(871, 1, 0.2, 0.4); carrier(796, 1, 0.2, 0.4);
dashes(883, 13, 5, 6, 0.62, 235, H); carrier(908, 1, 0.2, 0.5); carrier(917, 4, 0.25, 0.45); solid(919, 61, 157, 1);
dashes(931, 10, 3, 9, 0.68, 55, 205); dashes(931, 10, 3, 9, 0.68, 395, H); dashes(962, 2, 4, 16, 0.55);
dashes(990, 2, 4, 12, 0.7); dashes(998, 8, 4, 12, 0.6); carrier(1010, 4, 0.75, 0.54, 0, H, 2);
voice(1014, 6, 0.75, 0, 90, 3, 0.7); voice(1014, 6, 0.75, 160, 210, 3, 0.7); voice(1014, 6, 0.75, 300, 380, 4, 0.9);
carrier(1014, 14, 0.14, 0.4); carrier(1003, 10, 0.14, 0.38);
solid(1062, 0, 8, 0.5); solid(1062, 84, 109, 0.85); solid(1062, 163, 185, 0.5); solid(1062, 187, 218, 0.8); solid(1062, 243, 259, 0.85);
carrier(1183, 4, 0.6, 0.5); carrier(1188, 12, 0.25, 0.42);
carrier(1166, 19, 0.97, 0.81, 269, H, 0); carrier(1166, 19, 0.9, 0.8, 269, H, 0); carrier(1164, 23, 0.5, 0.65, 269, H, 0);
// Wide digital signal with slanting yellow striations
carrier(1201, 25, 0.5, 0.6);
for (let y = 0; y < H; y++) {
  for (let k = 0; k < 21; k++) {
    const p = Math.sin((k + y / 22 + Math.sin(y / 40) * 2) * 1.05) + Math.sin(k * 2.7 + y / 60) * 0.8 + (rnd() - 0.5) * 0.9;
    const i = y * W + Math.round((1203 + k) * S);
    v[i] = p > 0.85 ? 1 : p > -1.2 ? 0.84 : 0.45 * rnd();
  }
}
carrier(1231, 3, 0.2, 0.42);
for (let y = 0; y < H; y++) {
  for (let k = 0; k < 21; k++) {
    const a = 0.68 - Math.min(0.28, y / H * 0.42) + Math.sin(k * 1.3 + y / 70) * 0.07;
    if (rnd() < 0.9) put(1312 + k, y, Math.min(0.85, a + (rnd() - 0.5) * 0.36));
  }
}
carrier(1356, 3, 0.6, 0.5, 0, H, 1); carrier(1401, 2, 0.14, 0.35);
solid(1455, 28, 32, 0.5); solid(1454, 120, 122, 0.6); solid(1452, 202, 207, 0.6);

const stops = [[0, 0, 0, 31], [0.3, 38, 56, 120], [0.55, 105, 140, 250], [0.8, 255, 255, 255], [0.92, 255, 255, 255], [0.93, 255, 255, 0], [9, 255, 255, 0]];
const ctx = cv.getContext('2d'), img = ctx.createImageData(W, H);
for (let i = 0; i < v.length; i++) {
  let s = 1;
  while (v[i] > stops[s][0]) s++;
  const a = stops[s - 1], b = stops[s], t = (v[i] - a[0]) / (b[0] - a[0]);
  for (let c = 0; c < 3; c++) img.data[i * 4 + c] = a[c + 1] + (b[c + 1] - a[c + 1]) * t;
  img.data[i * 4 + 3] = 255;
}
ctx.putImageData(img, 0, 0);
```
